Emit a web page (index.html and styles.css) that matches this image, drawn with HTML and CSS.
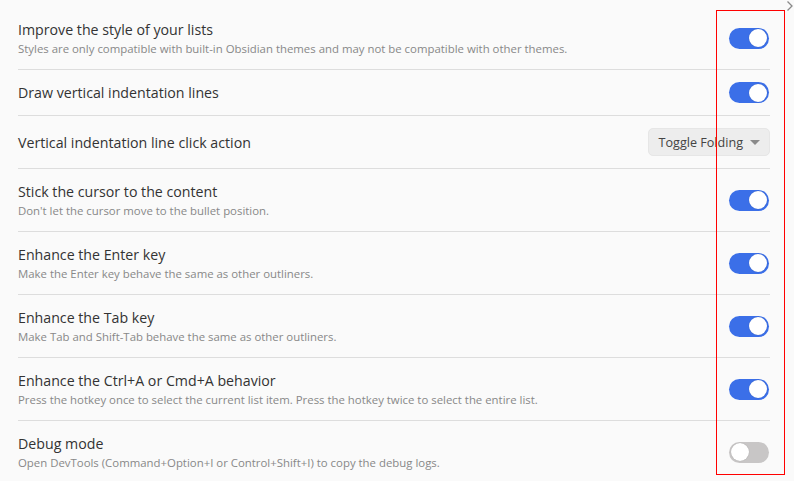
FILE: index.html
```html
<!DOCTYPE html>
<html>
<head>
<meta charset="utf-8">
<link rel="stylesheet" href="styles.css">
</head>
<body>
<div class="page">
  <div class="settings">
    <div class="item">
      <div class="info">
        <div class="name">Improve the style of your lists</div>
        <div class="desc">Styles are only compatible with built-in Obsidian themes and may not be compatible with other themes.</div>
      </div>
      <div class="control"><div class="toggle on"></div></div>
    </div>
    <div class="item">
      <div class="info">
        <div class="name">Draw vertical indentation lines</div>
      </div>
      <div class="control"><div class="toggle on"></div></div>
    </div>
    <div class="item">
      <div class="info">
        <div class="name">Vertical indentation line click action</div>
      </div>
      <div class="control">
        <div class="dropdown"><span>Toggle Folding</span><span class="caret"></span></div>
      </div>
    </div>
    <div class="item">
      <div class="info">
        <div class="name">Stick the cursor to the content</div>
        <div class="desc">Don't let the cursor move to the bullet position.</div>
      </div>
      <div class="control"><div class="toggle on"></div></div>
    </div>
    <div class="item">
      <div class="info">
        <div class="name">Enhance the Enter key</div>
        <div class="desc">Make the Enter key behave the same as other outliners.</div>
      </div>
      <div class="control"><div class="toggle on"></div></div>
    </div>
    <div class="item">
      <div class="info">
        <div class="name">Enhance the Tab key</div>
        <div class="desc">Make Tab and Shift-Tab behave the same as other outliners.</div>
      </div>
      <div class="control"><div class="toggle on"></div></div>
    </div>
    <div class="item">
      <div class="info">
        <div class="name">Enhance the Ctrl+A or Cmd+A behavior</div>
        <div class="desc">Press the hotkey once to select the current list item. Press the hotkey twice to select the entire list.</div>
      </div>
      <div class="control"><div class="toggle on"></div></div>
    </div>
    <div class="item">
      <div class="info">
        <div class="name">Debug mode</div>
        <div class="desc">Open DevTools (Command+Option+I or Control+Shift+I) to copy the debug logs.</div>
      </div>
      <div class="control"><div class="toggle"></div></div>
    </div>
  </div>
  <svg class="chevron" width="8" height="12" viewBox="0 0 8 12"><polyline points="1.5,1.5 6,6 1.5,10.5" fill="none" stroke="#8a8a8a" stroke-width="1.3"/></svg>
  <div class="highlight"></div>
</div>
</body>
</html>
```

FILE: styles.css
```css
html, body {
  margin: 0;
  padding: 0;
  background: #fafafa;
}
body {
  font-family: "Open Sans", "Noto Sans", sans-serif;
  color: #2e2e2e;
}
.page {
  position: relative;
  width: 794px;
  height: 481px;
  overflow: hidden;
}
.settings {
  display: flex;
  flex-direction: column;
  padding: 7px 24px 0 18px;
}
.item {
  display: flex;
  align-items: center;
  padding: 12px 0;
  border-bottom: 1px solid #dddddd;
}
.item:last-child {
  border-bottom: none;
}
.info {
  flex: 1;
  min-width: 0;
}
.name {
  font-size: 14.2px;
  line-height: 21px;
  color: #333333;
}
.desc {
  font-size: 11.4px;
  line-height: 17px;
  color: #888888;
}
.control {
  display: flex;
  align-items: center;
  justify-content: flex-end;
}
.toggle {
  position: relative;
  width: 40px;
  height: 21px;
  border-radius: 11px;
  background: #c8c6c6;
  margin-right: 1px;
}
.toggle::after {
  content: "";
  position: absolute;
  top: 1.5px;
  left: 2px;
  width: 18px;
  height: 18px;
  border-radius: 50%;
  background: #ffffff;
  box-shadow: 0 0 1px rgba(0,0,0,0.25);
}
.toggle.on {
  background: #3b6fe8;
}
.toggle.on::after {
  left: 20px;
}
.dropdown {
  display: flex;
  align-items: center;
  gap: 7px;
  height: 28px;
  box-sizing: border-box;
  padding: 0 9px 0 10px;
  background: #ededed;
  border: 1px solid #e6e6e6;
  border-radius: 5px;
  font-size: 12.6px;
  color: #444444;
}
.caret {
  width: 0;
  height: 0;
  border-left: 5px solid transparent;
  border-right: 5px solid transparent;
  border-top: 5px solid #8a8a8a;
}
.chevron {
  position: absolute;
  top: 0;
  right: 0;
}
.highlight {
  position: absolute;
  left: 716px;
  top: 10px;
  width: 67px;
  height: 463px;
  border: 1px solid #ff0000;
}
```
